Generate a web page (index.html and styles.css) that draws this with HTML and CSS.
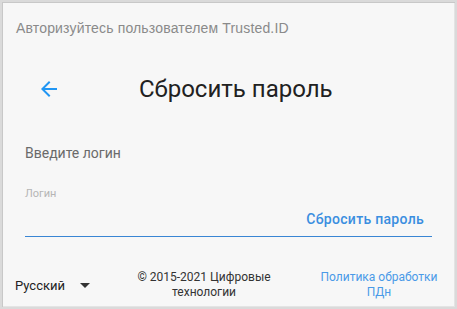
FILE: index.html
```html
<!DOCTYPE html>
<html lang="ru">
  <head>
    <meta charset="UTF-8" />
    <title>Сбросить пароль</title>
    <link rel="stylesheet" href="styles.css">
  </head>
  <body>
    <div class="frame">
      <div class="hint">Авторизуйтесь пользователем Trusted.ID</div>

      <div class="head">
        <button class="back" type="button">
          <svg width="24" height="24" viewBox="0 0 24 24">
            <path d="M20 11H7.83l5.59-5.59L12 4l-8 8 8 8 1.41-1.41L7.83 13H20v-2z" fill="#2196f3"/>
          </svg>
        </button>
        <h1 class="title">Сбросить пароль</h1>
      </div>

      <div class="form">
        <div class="prompt">Введите логин</div>
        <div class="field">
          <label class="field-label" for="login">Логин</label>
          <div class="field-row">
            <input id="login" class="field-input" type="text" />
            <button class="submit" type="button">Сбросить пароль</button>
          </div>
        </div>
      </div>

      <div class="footer">
        <div class="lang">Русский <span class="caret"></span></div>
        <div class="copy">© 2015-2021 Цифровые<br />технологии</div>
        <a class="policy" href="#">Политика обработки<br />ПДн</a>
      </div>
    </div>
  </body>
</html>
```

FILE: styles.css
```css
html,
body {
  margin: 0;
  padding: 0;
  background: #ffffff;
}

.frame {
  box-sizing: border-box;
  width: 457px;
  height: 309px;
  background: #f7f7f7;
  border: 2px solid #dadada;
  box-shadow: inset 1px 1px 0 #c8c8c8, inset -1px -1px 0 #e4e4e4;
  font-family: Roboto, "Liberation Sans", Arial, sans-serif;
  display: flex;
  flex-direction: column;
}

.hint {
  padding: 16px 0 0 14px;
  font-family: "Liberation Sans", Arial, sans-serif;
  font-size: 14px;
  line-height: 20px;
  letter-spacing: 0.16px;
  color: #8a8a8a;
}

.head {
  display: flex;
  align-items: center;
  height: 40px;
  margin-top: 31px;
}

.back {
  border: none;
  background: none;
  padding: 0;
  margin-left: 35px;
  width: 24px;
  height: 24px;
  display: flex;
  align-items: center;
  justify-content: center;
}

.title {
  margin: 0 0 0 78px;
  font-size: 24px;
  font-weight: 400;
  color: #212121;
}

.form {
  padding: 0 23px 0 23px;
}

.prompt {
  margin-top: 34px;
  font-size: 14px;
  line-height: 20px;
  color: #6a6a6a;
}

.field {
  margin-top: 24px;
}

.field-label {
  display: block;
  font-size: 11px;
  line-height: 14px;
  color: #b5b5b5;
}

.field-row {
  display: flex;
  align-items: center;
  border-bottom: 1px solid #3a86d4;
  height: 36px;
  box-sizing: border-box;
}

.field-input {
  flex: 1;
  border: none;
  background: transparent;
  outline: none;
}

.submit {
  border: none;
  background: none;
  padding: 0 8px 0 0;
  font-family: Roboto, "Liberation Sans", Arial, sans-serif;
  font-size: 14px;
  font-weight: 500;
  letter-spacing: 0.3px;
  color: #3a8ee0;
}

.footer {
  margin-top: auto;
  display: flex;
  align-items: center;
  padding: 0 13px 7px 13px;
  font-size: 12px;
  line-height: 15px;
}

.lang {
  width: 105px;
  display: flex;
  align-items: center;
  font-size: 13px;
  color: #222222;
}

.caret {
  margin-left: 15px;
  width: 0;
  height: 0;
  border-left: 5px solid transparent;
  border-right: 5px solid transparent;
  border-top: 5px solid #333333;
}

.copy {
  width: 168px;
  text-align: center;
  color: #333333;
}

.policy {
  width: 126px;
  margin-left: auto;
  text-align: center;
  color: #4a9ae8;
  text-decoration: none;
}
```
